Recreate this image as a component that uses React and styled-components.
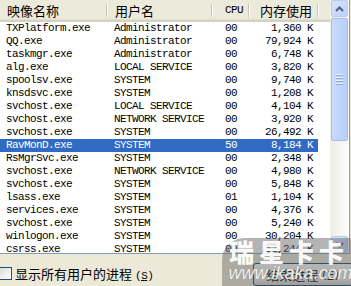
import React from "react";
import styled, { createGlobalStyle } from "styled-components";

const Global = createGlobalStyle`
  html, body { margin: 0; padding: 0; }
  body {
    background: #ECE9D8;
    font-family: "Liberation Mono", "Noto Sans CJK SC", monospace;
    overflow: hidden;
  }
`;

const Window = styled.div`
  position: relative;
  width: 351px;
  height: 286px;
  display: flex;
  flex-direction: column;
  overflow: hidden;
  background: #ECE9D8;
`;

const ListBox = styled.div`
  height: 256px;
  width: 349px;
  display: flex;
  background: #fff;
  border-bottom: 1px solid #7F9DB9;
  border-right: 1px solid #7F9DB9;
  overflow: hidden;
`;

const Table = styled.div`
  flex: 1;
  display: flex;
  flex-direction: column;
  overflow: hidden;
`;

const cols = "107px 105px 37px 69px";

const Header = styled.div`
  display: grid;
  grid-template-columns: ${cols} 1fr;
  height: 20px;
  background: #EBEADB;
  border-bottom: 2px solid #D6D2C2;
  box-shadow: inset 0 -1px 0 #E2DECD;
  flex-shrink: 0;
`;

const HeadCell = styled.div`
  display: flex;
  align-items: center;
  justify-content: ${(p) => (p.$right ? "flex-end" : "flex-start")};
  padding: 0 ${(p) => p.$pr || 0}px 0 ${(p) => p.$pl || 0}px;
  font-family: "Noto Sans CJK SC", sans-serif;
  font-size: 12px;
  color: #000;
  position: relative;
  &::after {
    content: "";
    display: ${(p) => (p.$nodiv ? "none" : "block")};
    position: absolute;
    right: 0;
    top: 4px;
    bottom: 3px;
    width: 1px;
    background: #C7C5B2;
    box-shadow: 1px 0 0 #fff;
  }
`;

const HeadText = styled.span`
  font-family: ${(p) => (p.$latin ? '"Liberation Mono", monospace' : '"Noto Sans CJK SC", sans-serif')};
  font-size: ${(p) => (p.$latin ? "11px" : "13px")};
  letter-spacing: ${(p) => (p.$latin ? "-0.6px" : "0")};
  line-height: 1;
`;

const Body = styled.div`
  display: flex;
  flex-direction: column;
`;

const Row = styled.div`
  display: grid;
  grid-template-columns: ${cols};
  width: 318px;
  height: 13px;
  background: ${(p) => (p.$sel ? "#316AC5" : "transparent")};
  color: ${(p) => (p.$sel ? "#fff" : "#000")};
`;

const Cell = styled.div`
  font-family: "Liberation Mono", monospace;
  font-size: 11px;
  letter-spacing: -0.6px;
  line-height: 13px;
  white-space: nowrap;
  overflow: hidden;
  text-align: ${(p) => (p.$right ? "right" : "left")};
  padding: 0 ${(p) => p.$pr || 0}px 0 ${(p) => p.$pl || 0}px;
`;

const ScrollBar = styled.div`
  width: 17px;
  margin-right: 1px;
  display: flex;
  flex-direction: column;
  background: linear-gradient(to right, #EEEDE5, #FCFCFA);
  border-left: 1px solid #F3F2EC;
`;

const ArrowBtn = styled.div`
  height: 17px;
  box-sizing: border-box;
  border: 1px solid #B6CAF3;
  border-radius: 2px;
  background: linear-gradient(to bottom right, #D9E5FD, #BCD0F9);
  display: flex;
  align-items: center;
  justify-content: center;
  flex-shrink: 0;
`;

const Track = styled.div`
  flex: 1;
  display: flex;
  flex-direction: column;
  padding-top: 1px;
`;

const Thumb = styled.div`
  height: 123px;
  box-sizing: border-box;
  border: 1px solid #A3BCF0;
  border-radius: 2px;
  background: linear-gradient(to right, #C9DAFC, #B9CEFB);
  display: flex;
  flex-direction: column;
  align-items: center;
  justify-content: center;
  gap: 1px;
`;

const Grip = styled.div`
  width: 7px;
  height: 1px;
  background: #EEF3FE;
  box-shadow: 0 1px 0 #8CA8E6;
  margin-bottom: 1px;
`;

const Bottom = styled.div`
  flex: 1;
  display: flex;
  align-items: flex-start;
  justify-content: space-between;
  padding-top: 9px;
`;

const CheckRow = styled.label`
  display: flex;
  align-items: center;
  gap: 3px;
  margin-top: 1px;
  margin-left: -1px;
  font-family: "Noto Sans CJK SC", sans-serif;
  font-size: 13px;
  color: #000;
`;

const Box = styled.span`
  width: 13px;
  height: 13px;
  box-sizing: border-box;
  border: 1px solid #1C5180;
  background: linear-gradient(to bottom right, #DCDCD7, #FFFFFF);
  display: inline-block;
`;

const Mnemonic = styled.span`
  font-family: "Liberation Mono", monospace;
  font-size: 11px;
  letter-spacing: -0.5px;
  margin-left: 3px;
`;

const Button = styled.div`
  width: 100px;
  height: 23px;
  margin-right: -2px;
  box-sizing: border-box;
  border: 1px solid #003C74;
  border-radius: 3px;
  background: linear-gradient(to bottom, #FFFFFF, #F0F0EA 70%, #D6D0C5);
  display: flex;
  align-items: center;
  justify-content: center;
  font-family: "Noto Sans CJK SC", sans-serif;
  font-size: 13px;
  color: #000;
`;

const Watermark = styled.div`
  position: absolute;
  left: 222px;
  top: 238px;
  right: 0;
  bottom: 0;
  background: linear-gradient(to bottom, rgba(105, 105, 105, 0.5), rgba(95, 95, 95, 0.45));
  border-radius: 22px 0 0 0;
  display: flex;
  flex-direction: column;
  align-items: center;
  pointer-events: none;
`;

const WmTitle = styled.div`
  font-family: "Noto Sans CJK SC", sans-serif;
  font-weight: 900;
  font-size: 25px;
  line-height: 25px;
  letter-spacing: 5px;
  margin-left: 5px;
  color: rgba(255, 255, 255, 0.95);
  margin-top: 1px;
`;

const WmUrl = styled.div`
  font-family: "Liberation Sans", sans-serif;
  font-style: italic;
  font-size: 18px;
  line-height: 18px;
  color: rgba(255, 255, 255, 0.9);
  text-shadow: 0 0 1px rgba(90, 90, 90, 0.6);
  margin-left: 8px;
`;

const rows = [
  ["TXPlatform.exe", "Administrator", "00", "1,360 K"],
  ["QQ.exe", "Administrator", "00", "79,924 K"],
  ["taskmgr.exe", "Administrator", "00", "6,748 K"],
  ["alg.exe", "LOCAL SERVICE", "00", "3,820 K"],
  ["spoolsv.exe", "SYSTEM", "00", "9,740 K"],
  ["knsdsvc.exe", "SYSTEM", "00", "1,208 K"],
  ["svchost.exe", "LOCAL SERVICE", "00", "4,104 K"],
  ["svchost.exe", "NETWORK SERVICE", "00", "3,920 K"],
  ["svchost.exe", "SYSTEM", "00", "26,492 K"],
  ["RavMonD.exe", "SYSTEM", "50", "8,184 K", true],
  ["RsMgrSvc.exe", "SYSTEM", "00", "2,348 K"],
  ["svchost.exe", "NETWORK SERVICE", "00", "4,980 K"],
  ["svchost.exe", "SYSTEM", "00", "5,848 K"],
  ["lsass.exe", "SYSTEM", "01", "1,104 K"],
  ["services.exe", "SYSTEM", "00", "4,376 K"],
  ["svchost.exe", "SYSTEM", "00", "5,240 K"],
  ["winlogon.exe", "SYSTEM", "00", "30,204 K"],
  ["csrss.exe", "SYSTEM", "00", "12,244 K"],
  ["smss.exe", "SYSTEM", "00", "388 K"],
];

const Arrow = ({ up }) => (
  <svg width="9" height="6" viewBox="0 0 9 6">
    <path
      d={up ? "M1 5 L4.5 1.5 L8 5" : "M1 1 L4.5 4.5 L8 1"}
      fill="none"
      stroke="#4D6185"
      strokeWidth="2"
    />
  </svg>
);

export default function App() {
  return (
    <Window>
      <Global />
      <ListBox>
        <Table>
          <Header>
            <HeadCell $pl={7}><HeadText>映像名称</HeadText></HeadCell>
            <HeadCell $pl={8}><HeadText>用户名</HeadText></HeadCell>
            <HeadCell $pl={13}><HeadText $latin>CPU</HeadText></HeadCell>
            <HeadCell $right $pr={6}><HeadText>内存使用</HeadText></HeadCell>
            <HeadCell $nodiv />
          </Header>
          <Body>
            {rows.map((r, i) => (
              <Row key={i} $sel={r[4]}>
                <Cell $pl={6}>{r[0]}</Cell>
                <Cell $pl={7}>{r[1]}</Cell>
                <Cell $pl={13}>{r[2]}</Cell>
                <Cell $right $pr={5}>{r[3]}</Cell>
              </Row>
            ))}
          </Body>
        </Table>
        <ScrollBar>
          <ArrowBtn><Arrow up /></ArrowBtn>
          <Track>
            <Thumb>
              <Grip /><Grip /><Grip /><Grip />
            </Thumb>
          </Track>
          <ArrowBtn><Arrow /></ArrowBtn>
        </ScrollBar>
      </ListBox>
      <Bottom>
        <CheckRow>
          <Box />
          <span>
            显示所有用户的进程<Mnemonic>(<u>S</u>)</Mnemonic>
          </span>
        </CheckRow>
        <Button>
          结束进程<Mnemonic>(<u>E</u>)</Mnemonic>
        </Button>
      </Bottom>
      <Watermark>
        <WmTitle>瑞星卡卡</WmTitle>
        <WmUrl>www.ikaka.com</WmUrl>
      </Watermark>
    </Window>
  );
}
